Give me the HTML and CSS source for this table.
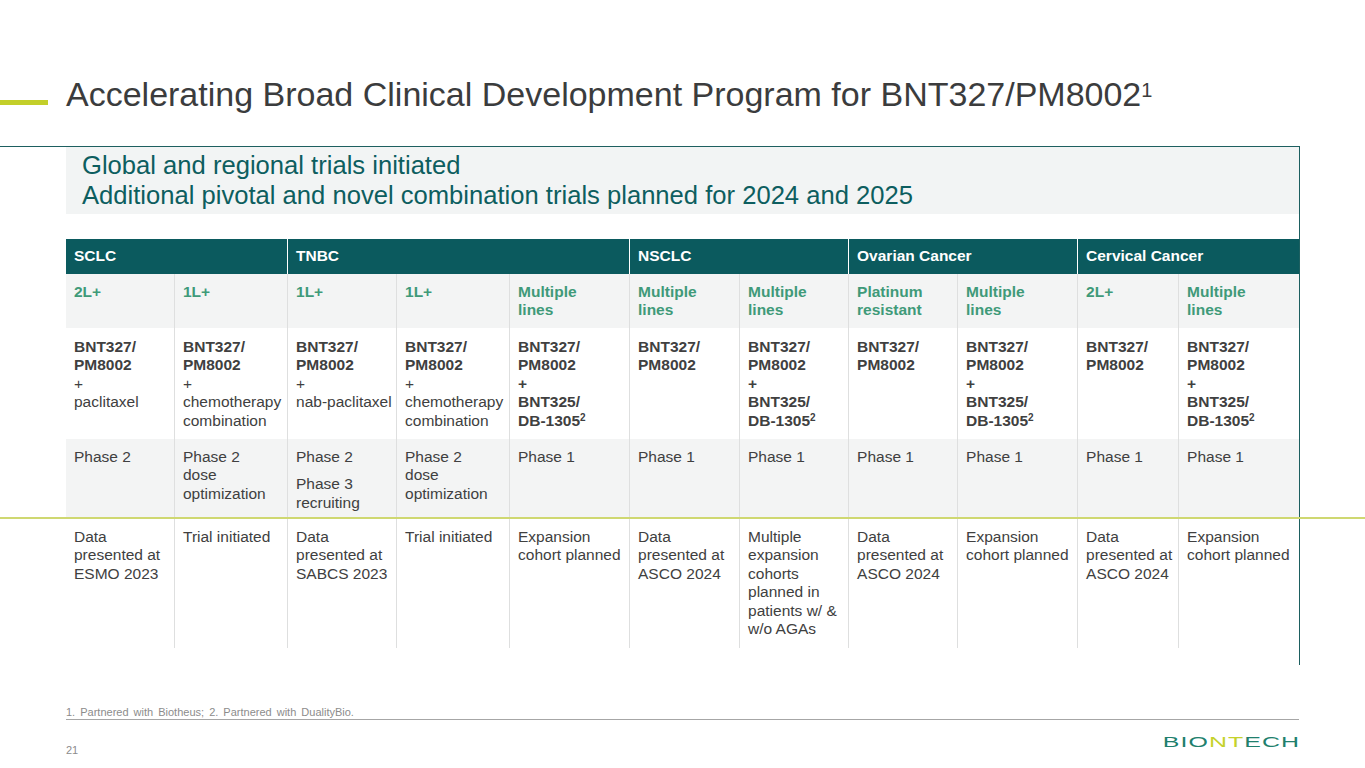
FILE: index.html
```html
<!DOCTYPE html>
<html lang="en">
<head>
<meta charset="utf-8">
<title>BNT327/PM8002 Clinical Development</title>
<link rel="stylesheet" href="styles.css">
</head>
<body>
<div class="slide">
  <header class="title-row">
    <span class="accent"></span>
    <h1 class="title">Accelerating Broad Clinical Development Program for BNT327/PM8002<sup>1</sup></h1>
  </header>

  <section class="frame">
    <div class="lead">
      <p>Global and regional trials initiated</p>
      <p>Additional pivotal and novel combination trials planned for 2024 and 2025</p>
    </div>

    <table class="pipeline">
      <colgroup>
        <col class="w108"><col class="w113"><col class="w109"><col class="w113"><col class="w120">
        <col class="w110"><col class="w109"><col class="w109"><col class="w120"><col class="w101"><col class="w121">
      </colgroup>
      <thead>
        <tr class="ind">
          <th colspan="2">SCLC</th>
          <th colspan="3">TNBC</th>
          <th colspan="2">NSCLC</th>
          <th colspan="2">Ovarian Cancer</th>
          <th colspan="2">Cervical Cancer</th>
        </tr>
      </thead>
      <tbody>
        <tr class="lines">
          <td>2L+</td>
          <td>1L+</td>
          <td>1L+</td>
          <td>1L+</td>
          <td>Multiple<br>lines</td>
          <td>Multiple<br>lines</td>
          <td>Multiple<br>lines</td>
          <td>Platinum<br>resistant</td>
          <td>Multiple<br>lines</td>
          <td>2L+</td>
          <td>Multiple<br>lines</td>
        </tr>
        <tr class="drugs">
          <td><strong>BNT327/<br>PM8002</strong><br>+<br>paclitaxel</td>
          <td><strong>BNT327/<br>PM8002</strong><br>+<br>chemotherapy combination</td>
          <td><strong>BNT327/<br>PM8002</strong><br>+<br>nab-paclitaxel</td>
          <td><strong>BNT327/<br>PM8002</strong><br>+<br>chemotherapy combination</td>
          <td><strong>BNT327/<br>PM8002<br>+<br>BNT325/<br>DB-1305<sup>2</sup></strong></td>
          <td><strong>BNT327/<br>PM8002</strong></td>
          <td><strong>BNT327/<br>PM8002<br>+<br>BNT325/<br>DB-1305<sup>2</sup></strong></td>
          <td><strong>BNT327/<br>PM8002</strong></td>
          <td><strong>BNT327/<br>PM8002<br>+<br>BNT325/<br>DB-1305<sup>2</sup></strong></td>
          <td><strong>BNT327/<br>PM8002</strong></td>
          <td><strong>BNT327/<br>PM8002<br>+<br>BNT325/<br>DB-1305<sup>2</sup></strong></td>
        </tr>
        <tr class="phase">
          <td>Phase 2</td>
          <td>Phase 2<br>dose optimization</td>
          <td>Phase 2<p class="next">Phase 3 recruiting</p></td>
          <td>Phase 2<br>dose optimization</td>
          <td>Phase 1</td>
          <td>Phase 1</td>
          <td>Phase 1</td>
          <td>Phase 1</td>
          <td>Phase 1</td>
          <td>Phase 1</td>
          <td>Phase 1</td>
        </tr>
        <tr class="status">
          <td>Data presented at ESMO 2023</td>
          <td>Trial initiated</td>
          <td>Data presented at SABCS 2023</td>
          <td>Trial initiated</td>
          <td>Expansion cohort planned</td>
          <td>Data presented at ASCO 2024</td>
          <td>Multiple expansion cohorts planned in patients w/ &amp; w/o AGAs</td>
          <td>Data presented at ASCO 2024</td>
          <td>Expansion cohort planned</td>
          <td>Data presented at ASCO 2024</td>
          <td>Expansion cohort planned</td>
        </tr>
      </tbody>
    </table>
  </section>

  <footer class="foot">
    <p class="footnote">1. Partnered with Biotheus; 2. Partnered with DualityBio.</p>
    <div class="bottom">
      <span class="page">21</span>
      <span class="logo">BIO<span class="nt">NT</span>ECH</span>
    </div>
  </footer>
</div>
</body>
</html>
```

FILE: styles.css
```css
* { box-sizing: border-box; }

body {
  margin: 0;
  background: #ffffff;
  font-family: "Liberation Sans", Arial, sans-serif;
}

.slide {
  width: 1365px;
  height: 768px;
  overflow: hidden;
  position: relative;
  background: #ffffff;
}

/* ---------- title ---------- */
.title-row {
  display: flex;
  align-items: flex-start;
  height: 146px;
  padding-top: 74px;
}

.accent {
  flex: none;
  width: 48px;
  height: 5px;
  margin-top: 26px;
  background: #c3cf2a;
}

.title {
  margin: 0 0 0 18px;
  font-size: 34px;
  line-height: 40px;
  font-weight: 400;
  color: #3b3c3d;
  white-space: nowrap;
}

.title sup {
  font-size: 20px;
  line-height: 0;
  vertical-align: 9px;
}

/* ---------- framed content ---------- */
.frame {
  width: 1300px;
  height: 519px;
  padding-left: 66px;
  border-top: 1px solid #1d5f60;
  border-right: 1px solid #1d5f60;
}

.lead {
  height: 67px;
  padding: 3px 0 0 16px;
  background: #f2f4f4;
  color: #0d5e5f;
  font-size: 25.6px;
  line-height: 30px;
}

.lead p { margin: 0; }

/* ---------- table ---------- */
.pipeline {
  width: 1233px;
  margin-top: 25px;
  border-collapse: separate;
  border-spacing: 0;
  table-layout: fixed;
  font-size: 15.5px;
  line-height: 18.4px;
  color: #404040;
}

.w101 { width: 101px; }
.w108 { width: 108px; }
.w109 { width: 109px; }
.w110 { width: 110px; }
.w113 { width: 113px; }
.w120 { width: 120px; }
.w121 { width: 121px; }

.pipeline th,
.pipeline td {
  padding: 9px 2px 0 8px;
  text-align: left;
  vertical-align: top;
}

.ind th {
  height: 35px;
  padding-top: 0;
  vertical-align: middle;
  background: #0b5a5e;
  color: #ffffff;
  font-weight: 700;
}

.ind th + th { border-left: 1px solid #ffffff; }

.pipeline tbody td + td { border-left: 1px solid #dedfdf; }

.lines td {
  height: 54px;
  background: #f3f4f4;
  color: #3f9a79;
  font-weight: 700;
}

.drugs td { height: 111px; padding-top: 10px; }

.drugs sup {
  font-size: 10px;
  line-height: 0;
  vertical-align: 5px;
}

.phase td {
  height: 78px;
  background: #f3f4f4;
}

.phase .next { margin: 9px 0 0; }

.status td {
  height: 131px;
  padding-top: 11px;
}

.status td:first-child { position: relative; }

.status td:first-child::before {
  content: "";
  position: absolute;
  left: -66px;
  top: 0;
  width: 1365px;
  height: 2px;
  background: #cfd871;
}

/* ---------- footer ---------- */
.foot {
  padding-left: 66px;
  padding-top: 41px;
}

.footnote {
  width: 1233px;
  margin: 0;
  border-bottom: 1px solid #a6a6a6;
  font-size: 11px;
  line-height: 13px;
  color: #8c8c8c;
  word-spacing: 2px;
}

.bottom {
  display: flex;
  justify-content: space-between;
  align-items: flex-start;
  width: 1234px;
}

.page {
  margin-top: 24px;
  font-size: 11px;
  line-height: 13px;
  color: #8c8c8c;
}

.logo {
  display: inline-block;
  margin-top: 14px;
  font-family: "Liberation Sans", Arial, sans-serif;
  font-weight: 400;
  font-size: 14px;
  line-height: 16px;
  letter-spacing: 0.6px;
  color: #217f6d;
  transform: scaleX(1.78);
  transform-origin: right center;
}

.logo .nt { color: #c5d22b; }
```
